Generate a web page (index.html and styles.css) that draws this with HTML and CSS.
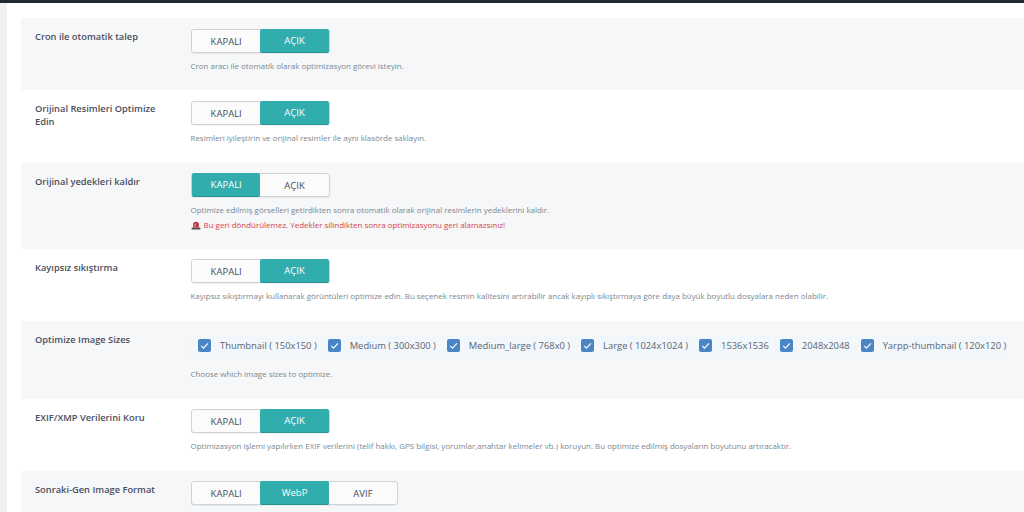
FILE: index.html
```html
<!DOCTYPE html>
<html lang="tr">
<head>
<meta charset="utf-8">
<title>Ayarlar</title>
<link rel="stylesheet" href="styles.css">
</head>
<body>
<div class="topbar"></div>
<div class="shell">
  <div class="rail"></div>
  <main class="panel">
    <section class="row shaded r1">
      <h3 class="label">Cron ile otomatik talep</h3>
      <div class="field">
        <div class="toggle"><span class="opt">KAPALI</span><span class="opt on">AÇIK</span></div>
        <p class="desc">Cron aracı ile otomatik olarak optimizasyon görevi isteyin.</p>
      </div>
    </section>
    <section class="row r2">
      <h3 class="label">Orijinal Resimleri Optimize Edin</h3>
      <div class="field">
        <div class="toggle"><span class="opt">KAPALI</span><span class="opt on">AÇIK</span></div>
        <p class="desc">Resimleri iyileştirin ve orijinal resimler ile aynı klasörde saklayın.</p>
      </div>
    </section>
    <section class="row shaded r3">
      <h3 class="label">Orijinal yedekleri kaldır</h3>
      <div class="field">
        <div class="toggle"><span class="opt on">KAPALI</span><span class="opt">AÇIK</span></div>
        <p class="desc">Optimize edilmiş görselleri getirdikten sonra otomatik olarak orijinal resimlerin yedeklerini kaldır.</p>
        <p class="warn"><svg class="siren" viewBox="0 0 10 9" aria-hidden="true"><path d="M2.2 6.5V3.6a2.8 2.8 0 0 1 5.6 0v2.9z" fill="#b5303a"/><path d="M3.4 5.8V3.6a1.6 1.6 0 0 1 1.6-1.6v3.8z" fill="#e0848a"/><rect x="0.6" y="6.5" width="8.8" height="2" rx="0.4" fill="#5d4a50"/></svg>Bu geri döndürülemez. Yedekler silindikten sonra optimizasyonu geri alamazsınız!</p>
      </div>
    </section>
    <section class="row r4">
      <h3 class="label">Kayıpsız sıkıştırma</h3>
      <div class="field">
        <div class="toggle"><span class="opt">KAPALI</span><span class="opt on">AÇIK</span></div>
        <p class="desc">Kayıpsız sıkıştırmayı kullanarak görüntüleri optimize edin. Bu seçenek resmin kalitesini artırabilir ancak kayıplı sıkıştırmaya göre daya büyük boyutlu dosyalara neden olabilir.</p>
      </div>
    </section>
    <section class="row shaded r5">
      <h3 class="label">Optimize Image Sizes</h3>
      <div class="field">
        <div class="checks">
          <label class="check"><svg class="box" viewBox="0 0 13 13" aria-hidden="true"><rect width="13" height="13" rx="2" fill="#4a86c5"/><path d="M3.2 6.8l2.3 2.3 4.4-4.8" fill="none" stroke="#fff" stroke-width="1.1"/></svg>Thumbnail ( 150x150 )</label>
          <label class="check"><svg class="box" viewBox="0 0 13 13" aria-hidden="true"><rect width="13" height="13" rx="2" fill="#4a86c5"/><path d="M3.2 6.8l2.3 2.3 4.4-4.8" fill="none" stroke="#fff" stroke-width="1.1"/></svg>Medium ( 300x300 )</label>
          <label class="check"><svg class="box" viewBox="0 0 13 13" aria-hidden="true"><rect width="13" height="13" rx="2" fill="#4a86c5"/><path d="M3.2 6.8l2.3 2.3 4.4-4.8" fill="none" stroke="#fff" stroke-width="1.1"/></svg>Medium_large ( 768x0 )</label>
          <label class="check"><svg class="box" viewBox="0 0 13 13" aria-hidden="true"><rect width="13" height="13" rx="2" fill="#4a86c5"/><path d="M3.2 6.8l2.3 2.3 4.4-4.8" fill="none" stroke="#fff" stroke-width="1.1"/></svg>Large ( 1024x1024 )</label>
          <label class="check"><svg class="box" viewBox="0 0 13 13" aria-hidden="true"><rect width="13" height="13" rx="2" fill="#4a86c5"/><path d="M3.2 6.8l2.3 2.3 4.4-4.8" fill="none" stroke="#fff" stroke-width="1.1"/></svg>1536x1536</label>
          <label class="check"><svg class="box" viewBox="0 0 13 13" aria-hidden="true"><rect width="13" height="13" rx="2" fill="#4a86c5"/><path d="M3.2 6.8l2.3 2.3 4.4-4.8" fill="none" stroke="#fff" stroke-width="1.1"/></svg>2048x2048</label>
          <label class="check"><svg class="box" viewBox="0 0 13 13" aria-hidden="true"><rect width="13" height="13" rx="2" fill="#4a86c5"/><path d="M3.2 6.8l2.3 2.3 4.4-4.8" fill="none" stroke="#fff" stroke-width="1.1"/></svg>Yarpp-thumbnail ( 120x120 )</label>
        </div>
        <p class="desc sizes">Choose which image sizes to optimize.</p>
      </div>
    </section>
    <section class="row r6">
      <h3 class="label">EXIF/XMP Verilerini Koru</h3>
      <div class="field">
        <div class="toggle"><span class="opt">KAPALI</span><span class="opt on">AÇIK</span></div>
        <p class="desc">Optimizasyon işlemi yapılırken EXIF verilerini (telif hakkı, GPS bilgisi, yorumlar,anahtar kelimeler vb.) koruyun. Bu optimize edilmiş dosyaların boyutunu artıracaktır.</p>
      </div>
    </section>
    <section class="row shaded r7">
      <h3 class="label">Sonraki-Gen Image Format</h3>
      <div class="field">
        <div class="toggle"><span class="opt">KAPALI</span><span class="opt on">WebP</span><span class="opt">AVIF</span></div>
      </div>
    </section>
  </main>
</div>
</body>
</html>
```
FILE: styles.css
```css
* { box-sizing: border-box; }
html, body { margin: 0; height: 100%; overflow: hidden; }
body {
  background: #fff;
  font-family: "Open Sans", "Noto Sans", sans-serif;
  color: #50575e;
}
.topbar { height: 3px; background: #23282d; }
.shell { display: flex; height: 509px; }
.rail { width: 7px; background: #f0f0f1; flex: none; }
.panel { flex: 1; padding: 15px 0 0 14px; min-width: 0; }
.row {
  display: grid;
  grid-template-columns: 156px 1fr;
  padding: 10px 0 0 14px;
}
.shaded { background: #f5f7f8; }
.r1 { height: 72px; }
.r2 { height: 73px; }
.r3 { height: 86px; }
.r4 { height: 72px; }
.r5 { height: 78px; }
.r6 { height: 72px; }
.r7 { height: 41px; }
.r1 .toggle, .r2 .toggle { margin-top: 1px; }
.label {
  margin: 3px 0 0;
  font-size: 9.3px;
  line-height: 12.5px;
  font-weight: 600;
  color: #4a4f5e;
  padding-right: 20px;
}
.toggle {
  display: flex;
  width: fit-content;
  height: 24px;
  border-radius: 3px;
  border: 1px solid #d0d3d6;
  background: #fbfbfb;
  box-shadow: 0 1px 1px rgba(0,0,0,.06);
}
.opt {
  width: 68.4px;
  margin: -1px 0;
  display: flex;
  align-items: center;
  justify-content: center;
  font-size: 9.5px;
  color: #474c58;
}
.opt.on {
  background: #32adad;
  color: #fff;
  border-bottom: 1px solid #2a9393;
  border-radius: 2px;
}
.desc {
  margin: 7px 0 0 -0.5px;
  font-size: 7.96px;
  line-height: 12px;
  color: #7d8790;
  white-space: nowrap;
}
.sizes { margin-top: 13px; }
.warn {
  margin: 3px 0 0 -0.5px;
  font-size: 7.96px;
  line-height: 12px;
  color: #d9434e;
  display: flex;
  align-items: center;
  white-space: nowrap;
}
.siren { width: 10px; height: 9px; margin-right: 3px; flex: none; }
.checks { display: flex; gap: 2px; margin-top: 5px; }
.check {
  display: flex;
  align-items: center;
  height: 19px;
  padding: 0 2px 0 7px;
  background: #f1f7fb;
  border-radius: 2px;
  font-size: 9.4px;
  color: #5c6470;
  white-space: nowrap;
}
.box { width: 13px; height: 13px; margin-right: 9px; flex: none; }
```
